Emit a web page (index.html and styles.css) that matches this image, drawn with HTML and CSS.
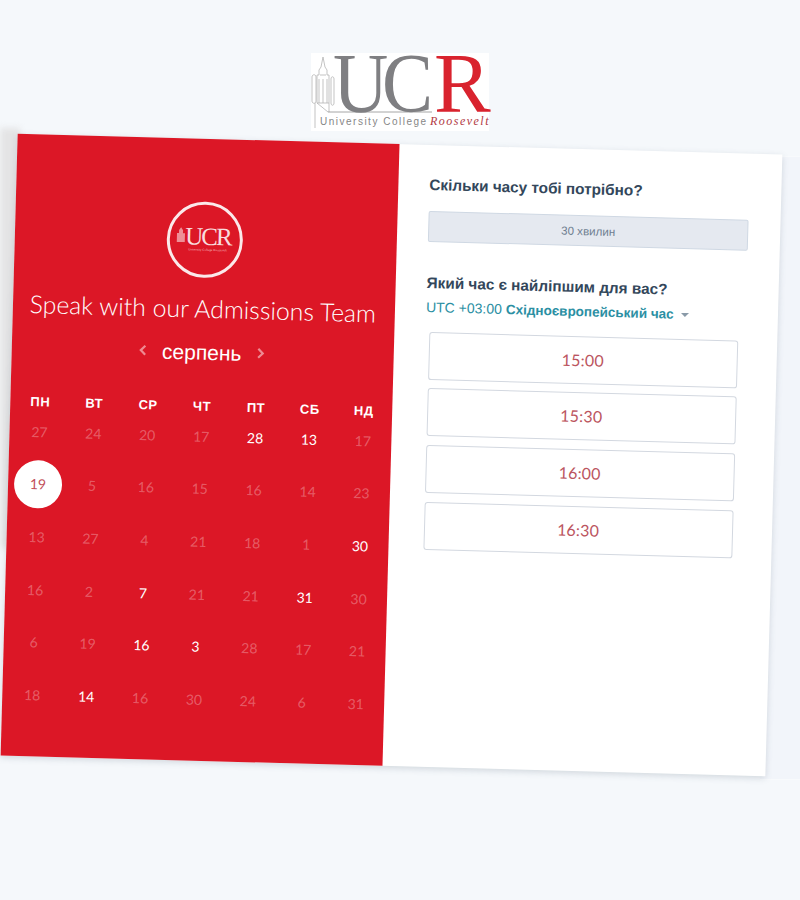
FILE: index.html
```html
<!DOCTYPE html>
<html lang="uk">
<head>
	<meta charset="UTF-8">
	<title>Speak with our Admissions Team</title>
	<link rel="stylesheet" href="styles.css">
</head>
<body>
	<div class="side-shade"></div>
	<div class="back-strip"></div>
	<header class="top">
		<div class="logo">
			<svg class="logo-tower" viewBox="0 0 125 75" width="125" height="75">
				<g fill="none" stroke="#b4b4b4" stroke-width=".8">
					<path d="M1 22v24c0 3 4 3 4 0V22c0-3-4-3-4 0zM20 24v24c0 3 3 3 3 0V24c0-3-3-3-3 0z"/>
					<path d="M6 48V20h2v-5l2-3 2-10 2 10 2 3v5h2v28z"/>
					<path d="M9 20h6M8 24v24M12 24v24M16 24v24"/>
					<path d="M4 48v25M6 48l11 9M18 48v9"/>
					<path d="M17 57h104" stroke="#8f8f8f"/>
				</g>
			</svg>
			<div class="logo-word"><span class="logo-uc">UC</span><span class="logo-r">R</span></div>
			<div class="logo-tag">University College <em>Roosevelt</em></div>
		</div>
	</header>

	<main class="card">
		<section class="calendar">
			<div class="badge">
				<svg class="badge-tower" viewBox="0 0 10 18" width="10" height="18">
					<path d="M5 0v3L3 6v3H1v9h8V9H7V6L5 3z" fill="#ee8f96"/>
				</svg>
				<div class="badge-word">UCR</div>
				<div class="badge-tag">University College Roosevelt</div>
			</div>
			<h1 class="title">Speak with our Admissions Team</h1>
			<div class="month">
				<svg class="chevron" viewBox="0 0 8 12" width="8" height="12"><path d="M6.500 1.500 2 6l4.500 4.500"/></svg>
				<span class="month-name">серпень</span>
				<svg class="chevron" viewBox="0 0 8 12" width="8" height="12"><path d="M1.500 1.500 6 6l-4.500 4.500"/></svg>
			</div>
			<div class="weekdays">
				<span>ПН</span><span>ВТ</span><span>СР</span><span>ЧТ</span><span>ПТ</span><span>СБ</span><span>НД</span>
			</div>
			<div class="days">
				<span class="day">27</span><span class="day">24</span><span class="day">20</span><span class="day">17</span><span class="day on">28</span><span class="day on">13</span><span class="day">17</span>
				<span class="day selected"><b>19</b></span><span class="day">5</span><span class="day">16</span><span class="day">15</span><span class="day">16</span><span class="day">14</span><span class="day">23</span>
				<span class="day">13</span><span class="day">27</span><span class="day">4</span><span class="day">21</span><span class="day">18</span><span class="day">1</span><span class="day on">30</span>
				<span class="day">16</span><span class="day">2</span><span class="day on">7</span><span class="day">21</span><span class="day">21</span><span class="day on">31</span><span class="day">30</span>
				<span class="day">6</span><span class="day">19</span><span class="day on">16</span><span class="day on">3</span><span class="day">28</span><span class="day">17</span><span class="day">21</span>
				<span class="day">18</span><span class="day on">14</span><span class="day">16</span><span class="day">30</span><span class="day">24</span><span class="day">6</span><span class="day">31</span>
			</div>
		</section>

		<section class="times">
			<h2 class="question">Скільки часу тобі потрібно?</h2>
			<div class="duration">30 хвилин</div>
			<h2 class="question question-time">Який час є найліпшим для вас?</h2>
			<div class="zone">UTC +03:00 <strong>Східноєвропейський час</strong><i class="caret"></i></div>
			<ul class="slots">
				<li class="slot">15:00</li>
				<li class="slot">15:30</li>
				<li class="slot">16:00</li>
				<li class="slot">16:30</li>
			</ul>
		</section>
	</main>
</body>
</html>
```

FILE: styles.css
```css
*{
	padding: 0;
	margin: 0;
	box-sizing: border-box;
}
ul{
	list-style: none;
}
body{
	position: relative;
	height: 900px;
	overflow: hidden;
	background: #f5f8fb;
	font-family: "Liberation Sans", Arial, sans-serif;
}

/* faint things behind the card */
.side-shade{
	position: absolute;
	left: 0;
	top: 128px;
	width: 20px;
	height: 420px;
	background: #e4e4e5;
	filter: blur(3px);
}
.back-strip{
	position: absolute;
	right: 0;
	top: 156px;
	width: 40px;
	height: 624px;
	background: #f2f5fa;
	border-top: 1px solid #f8fafc;
	border-bottom: 1px solid #f8fafc;
}

/* logo */
.top{
	display: flex;
	justify-content: center;
	padding-top: 53px;
	height: 144px;
}
.logo{
	position: relative;
	width: 178px;
	height: 78px;
	background: #fff;
	font-family: "Liberation Serif", serif;
}
.logo-tower{
	position: absolute;
	left: 0;
	top: 2px;
}
.logo-word{
	height: 60px;
	margin-bottom: 1px;
	padding-left: 22px;
	font-size: 85px;
	line-height: 60px;
	letter-spacing: -7px;
	white-space: nowrap;
}
.logo-uc{
	display: inline-block;
	transform: scaleX(.9);
	transform-origin: left center;
	color: #7f7f82;
}
.logo-r{
	display: inline-block;
	margin-left: -3px;
	color: #d9232e;
}
.logo-tag{
	padding-left: 9px;
	font-family: "Liberation Sans", sans-serif;
	font-size: 10px;
	line-height: 14px;
	letter-spacing: 1.5px;
	color: #868686;
	white-space: nowrap;
}
.logo-tag em{
	margin-left: -2px;
	font-family: "Liberation Serif", serif;
	font-size: 12px;
	letter-spacing: 1.5px;
	color: #b23a44;
}

/* card */
.card{
	display: flex;
	width: 765px;
	height: 622px;
	margin-left: 9px;
	transform: rotate(1.57deg);
	background: #fff;
	box-shadow: 0 2px 6px rgba(80, 100, 120, .22);
}

/* left side */
.calendar{
	display: flex;
	flex-direction: column;
	align-items: center;
	width: 382px;
	padding-top: 63px;
	background: #dc1726;
	color: #fff;
}
.badge,.title,.month{
	margin-right: 2px;
}
.badge{
	position: relative;
	display: flex;
	flex-direction: column;
	align-items: center;
	justify-content: center;
	width: 76px;
	height: 76px;
	padding-left: 6px;
	border: 3px solid #fbe9ea;
	border-radius: 50%;
}
.badge-tower{
	position: absolute;
	left: 6px;
	top: 20px;
}
.badge-word{
	margin-top: -2px;
	font-family: "Liberation Serif", serif;
	font-size: 25px;
	line-height: 22px;
	letter-spacing: -2px;
	color: #f8dcde;
}
.badge-tag{
	font-size: 3px;
	line-height: 4px;
	color: #f4b5ba;
	white-space: nowrap;
}
.title{
	height: 30px;
	margin-top: 16px;
	font-family: Lato, sans-serif;
	font-size: 24.8px;
	font-weight: 300;
	line-height: 30px;
	white-space: nowrap;
}
.month{
	display: flex;
	align-items: center;
	gap: 15.5px;
	height: 30px;
	margin-top: 14px;
}
.month-name{
	font-size: 21px;
}
.chevron{
	margin-top: -3px;
	fill: none;
	stroke: #ee8a92;
	stroke-width: 2.2;
}
.weekdays,.days{
	display: grid;
	grid-template-columns: repeat(7, 1fr);
	width: 100%;
	padding: 0 1.5px 0 3px;
	text-align: center;
}
.weekdays{
	height: 18px;
	margin-top: 30px;
	font-size: 13px;
	font-weight: bold;
	line-height: 18px;
	letter-spacing: .5px;
}
.days{
	margin-top: 5px;
	row-gap: 22.7px;
	font-family: Lato, sans-serif;
	font-size: 14px;
}
.day{
	display: flex;
	align-items: center;
	justify-content: center;
	height: 30px;
	color: rgba(255, 255, 255, .3);
}
.day.on{
	color: #fff;
}
.day.selected b{
	display: flex;
	flex-shrink: 0;
	align-items: center;
	justify-content: center;
	width: 48px;
	height: 48px;
	border-radius: 50%;
	background: #fff;
	color: #c2505b;
	font-weight: normal;
}

/* right side */
.times{
	flex: 1;
	padding: 30px 0 0 31px;
}
.question{
	font-size: 15.3px;
	font-weight: bold;
	line-height: 20px;
	color: #33475b;
}
.duration{
	width: 320px;
	height: 31px;
	margin-top: 16px;
	background: #e5e9f0;
	border: 1px solid #cfd8e3;
	border-radius: 2px;
	font-size: 11.6px;
	line-height: 29px;
	text-align: center;
	color: #6f7f90;
}
.question-time{
	margin-top: 31px;
}
.zone{
	margin-top: 3.5px;
	font-size: 14px;
	line-height: 20px;
	color: #2b8fa3;
	white-space: nowrap;
}
.zone strong{
	font-size: 13.5px;
}
.caret{
	display: inline-block;
	margin-left: 7px;
	vertical-align: middle;
	border: 4px solid transparent;
	border-top-color: #8a9aa8;
	border-bottom: 0;
}
.slots{
	display: flex;
	flex-direction: column;
	gap: 8.7px;
	width: 309px;
	margin: 14px 0 0 3.600px;
}
.slot{
	height: 48px;
	background: #fff;
	border: 1px solid #d3d8e0;
	border-radius: 3px;
	font-family: Lato, sans-serif;
	font-size: 16px;
	line-height: 46px;
	letter-spacing: .2px;
	text-align: center;
	color: #bb5560;
}
```
